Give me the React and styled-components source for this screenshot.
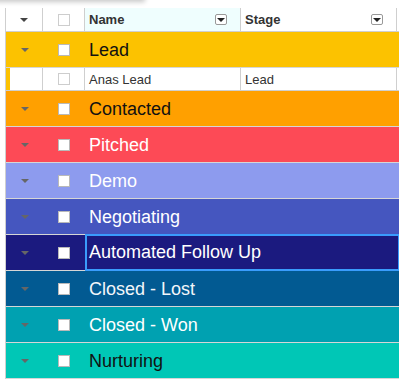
import React from 'react';
import styled, { createGlobalStyle } from "styled-components";

const Global = createGlobalStyle`
  body {
    margin: 0;
    background: #fff;
    font-family: "Liberation Sans", Arial, sans-serif;
  }
`;

const Page = styled.div`
  position: relative;
  width: 399px;
  height: 383px;
  overflow: hidden;
  padding: 8px 0 0 5px;
  box-sizing: border-box;
`;

const TopShadow = styled.div`
  position: absolute;
  top: -12px;
  left: -10px;
  width: 155px;
  height: 12px;
  background: #fff;
  box-shadow: 0 2px 5px rgba(0, 0, 0, 0.22);
`;

const Grid = styled.div`
  width: 394px;
  border-left: 1px solid #cfcfcf;
`;

const columns = "37px 42px 156px 156px 2px";

const HeaderRow = styled.div`
  display: grid;
  grid-template-columns: ${columns};
  height: 24px;
  border-bottom: 1px solid #cfcfcf;
  box-sizing: border-box;
`;

const HeadCell = styled.div`
  display: flex;
  align-items: center;
  justify-content: ${(p) => (p.$center ? "center" : "space-between")};
  padding: ${(p) => (p.$center ? "0" : "0 13px 0 4px")};
  border-right: 1px solid #cfcfcf;
  background: ${(p) => (p.$active ? "#effefe" : "#fff")};
  font-size: 13px;
  font-weight: bold;
  color: #333;
`;

const Caret = styled.span`
  width: 0;
  height: 0;
  border-left: 4px solid transparent;
  border-right: 4px solid transparent;
  border-top: 4px solid ${(p) => p.$color || "#666"};
`;

const Check = styled.span`
  width: 12px;
  height: 12px;
  box-sizing: border-box;
  border: 1px solid ${(p) => (p.$filled ? "#b9b9b9" : "#cdcdcd")};
  background: ${(p) => (p.$filled ? "#fff" : "transparent")};
`;

const FilterButton = styled.span`
  width: 12px;
  height: 11px;
  box-sizing: border-box;
  border: 1px solid #999;
  border-radius: 2px;
  background: #fff;
  display: flex;
  align-items: center;
  justify-content: center;
`;

const GroupRow = styled.div`
  display: grid;
  grid-template-columns: 37px 42px 1fr;
  height: 36px;
  box-sizing: border-box;
  padding-top: 1px;
  border-bottom: 1px solid #d6d6d6;
  background: ${(p) => p.$bg};
  color: ${(p) => p.$fg};
`;

const Centered = styled.div`
  display: flex;
  align-items: center;
  justify-content: center;
`;

const GroupLabel = styled.div`
  display: flex;
  align-items: center;
  padding: 0 0 0 4px;
  font-size: 18px;
  margin-top: ${(p) => (p.$focused ? "-2px" : "0")};
  margin-bottom: ${(p) => (p.$focused ? "-1px" : "0")};
  box-shadow: ${(p) => (p.$focused ? "inset 0 0 0 2px #3a9cfc" : "none")};
`;

const DataRow = styled.div`
  display: grid;
  grid-template-columns: ${columns};
  height: 23px;
  box-sizing: border-box;
  border-bottom: 1px solid #cfcfcf;
  background: #fff;
`;

const DataCell = styled.div`
  display: flex;
  align-items: center;
  justify-content: ${(p) => (p.$center ? "center" : "flex-start")};
  padding-left: ${(p) => (p.$center ? "0" : "4px")};
  border-right: 1px solid #cfcfcf;
  font-size: 13px;
  color: #333;
  box-shadow: ${(p) => (p.$strip ? `inset 4px 0 0 ${p.$strip}` : "none")};
`;

const groups = [
  { name: "Lead", bg: "#fcc200", fg: "#111", rows: [{ name: "Anas Lead", stage: "Lead" }] },
  { name: "Contacted", bg: "#ffa000", fg: "#111" },
  { name: "Pitched", bg: "#fd4a56", fg: "#fff" },
  { name: "Demo", bg: "#8d9bee", fg: "#fff" },
  { name: "Negotiating", bg: "#4556bf", fg: "#fff" },
  { name: "Automated Follow Up", bg: "#1b1a7f", fg: "#fff", focused: true },
  { name: "Closed - Lost", bg: "#025a92", fg: "#f2f6fa" },
  { name: "Closed - Won", bg: "#00a1b1", fg: "#fff" },
  { name: "Nurturing", bg: "#00c7b6", fg: "#111" },
];

const App = () => {
  return (
    <Page>
      <Global />
      <TopShadow />
      <Grid>
        <HeaderRow>
          <HeadCell $center><Caret $color="#444" /></HeadCell>
          <HeadCell $center><Check /></HeadCell>
          <HeadCell $active>
            Name
            <FilterButton><Caret $color="#222" /></FilterButton>
          </HeadCell>
          <HeadCell>
            Stage
            <FilterButton><Caret $color="#222" /></FilterButton>
          </HeadCell>
        </HeaderRow>
        {groups.map((g) => (
          <React.Fragment key={g.name}>
            <GroupRow $bg={g.bg} $fg={g.fg}>
              <Centered><Caret /></Centered>
              <Centered><Check $filled /></Centered>
              <GroupLabel $focused={g.focused}>{g.name}</GroupLabel>
            </GroupRow>
            {(g.rows || []).map((r) => (
              <DataRow key={r.name}>
                <DataCell $center $strip={g.bg} />
                <DataCell $center><Check /></DataCell>
                <DataCell>{r.name}</DataCell>
                <DataCell>{r.stage}</DataCell>
              </DataRow>
            ))}
          </React.Fragment>
        ))}
      </Grid>
    </Page>
  );
};

export default App;
